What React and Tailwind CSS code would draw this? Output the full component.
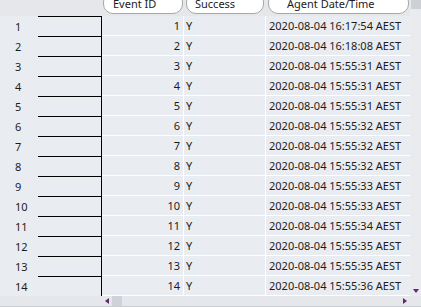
import React from "react";

const times = [
  "16:17:54", "16:18:08", "15:55:31", "15:55:31", "15:55:31", "15:55:32", "15:55:32",
  "15:55:32", "15:55:33", "15:55:33", "15:55:34", "15:55:35", "15:55:35", "15:55:36",
];

function Tri({ dir }) {
  const pts = {
    left: "4,0 4,6 0,3",
    right: "0,0 0,6 4,3",
    down: "0,0 6,0 3,4",
  }[dir];
  const w = dir === "down" ? 6 : 4;
  const h = dir === "down" ? 4 : 6;
  return (
    <svg width={w} height={h} viewBox={`0 0 ${w} ${h}`}>
      <polygon points={pts} fill="#5e2a6c" />
    </svg>
  );
}

export default function App() {
  return (
    <div className="w-[421px] h-[307px] overflow-hidden flex flex-col bg-[#e9ecf1] font-['Noto_Sans',sans-serif] text-[11px] text-[#1c1c1c] leading-none">
      <div className="flex h-[296px] shrink-0">
        <div className="w-[410px] flex flex-col">
          <div className="h-[16px] shrink-0 flex bg-[#e6e7ea]">
            <div className="w-[103px] shrink-0" />
            <div className="w-[80px] h-[22px] -mt-[8px] shrink-0 bg-white border border-[#a8a8a8] rounded-[10px] pl-[9px] text-[11px] flex items-center">
              Event ID
            </div>
            <div className="w-[3px] shrink-0" />
            <div className="w-[78px] h-[22px] -mt-[8px] shrink-0 bg-white border border-[#a8a8a8] rounded-[10px] pl-[8px] text-[11px] flex items-center">
              Success
            </div>
            <div className="w-[4px] shrink-0" />
            <div className="w-[141px] h-[22px] -mt-[8px] shrink-0 bg-white border border-[#a8a8a8] rounded-[10px] pl-[18px] text-[11px] flex items-center">
              Agent Date/Time
            </div>
          </div>
          {times.map((t, i) => (
            <div key={i} className="h-[20px] shrink-0 flex">
              <div className="w-[38px] shrink-0 pl-[15px] flex items-center">{i + 1}</div>
              <div className="w-[64px] shrink-0 border-t border-r border-black" />
              <div className="w-[82px] shrink-0 border-r border-b border-white flex items-center justify-end pr-[3px]">
                {i + 1}
              </div>
              <div className="w-[82px] shrink-0 border-r border-b border-white flex items-center pl-[2px]">
                Y
              </div>
              <div className="flex-1 border-b border-white flex items-center pl-[3px]">
                2020-08-04 {t} AEST
              </div>
            </div>
          ))}
        </div>
        <div className="w-[11px] shrink-0 bg-[#e9ebee] flex flex-col">
          <div className="h-[9px] bg-[#cdd0d4] ml-[1px]" />
          <div className="flex-1" />
          <div className="h-[11px] flex items-center justify-center">
            <Tri dir="down" />
          </div>
        </div>
      </div>
      <div className="h-[11px] shrink-0 flex bg-[#e6e7ea] border-b border-[#c9cdd2]">
        <div className="w-[102px] shrink-0" />
        <div className="w-[10px] shrink-0 flex items-center justify-center">
          <Tri dir="left" />
        </div>
        <div className="w-[10px] shrink-0 bg-[#cdd3d9]" />
        <div className="flex-1" />
        <div className="w-[10px] shrink-0 flex items-center justify-center">
          <Tri dir="right" />
        </div>
        <div className="w-[11px] shrink-0" />
      </div>
    </div>
  );
}
